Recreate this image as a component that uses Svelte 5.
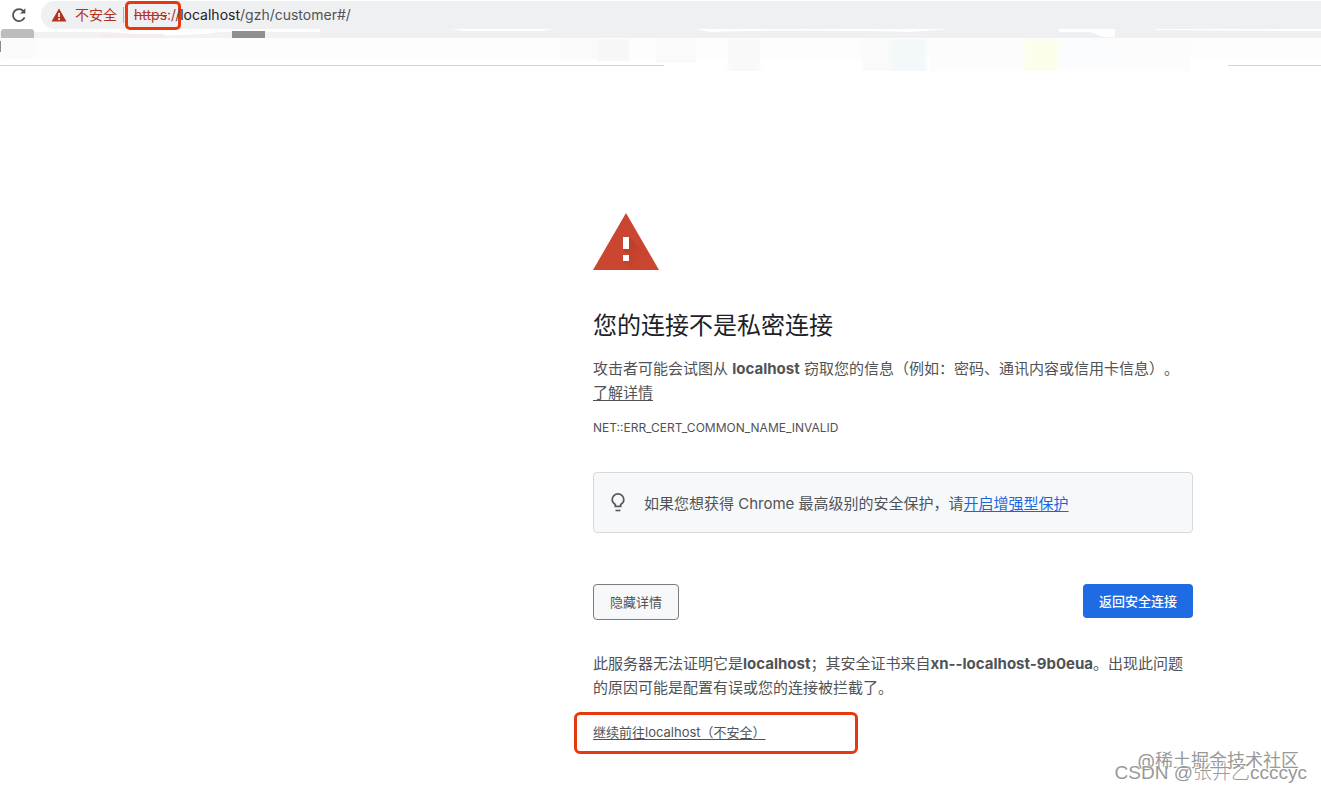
<script>
  const host = 'localhost';
  let open = $state(true);
</script>

<div class="window">
  <header>
    <div class="toolbar">
      <button class="reload" aria-label="重新加载">
        <svg width="16" height="16" viewBox="0 0 16 16">
          <path d="M13.600 10.300A6 6 0 1 1 12.600 4.200" fill="none" stroke="#505356" stroke-width="1.800" />
          <path d="M14.400 1.200v5.400H9z" fill="#505356" />
        </svg>
      </button>
      <div class="omnibox">
        <svg class="warn" width="16" height="14" viewBox="0 0 16 14">
          <path d="M8 0.5L15.5 13.5H0.5z" fill="#b5311f" />
          <path d="M7.2 5h1.7v4H7.2zM7.2 10.2h1.7v1.7H7.2z" fill="#fff" />
        </svg>
        <span class="unsafe">不安全</span>
        <span class="divider"></span>
        <div class="url"><span class="scheme"><s>https</s>:/</span>/<span class="host">{host}</span>/gzh/customer#/</div>
      </div>
    </div>
    <svg class="bookmarks" height="45" width="100%" aria-hidden="true">
      <defs>
        <filter id="soft" x="-5%" y="-20%" width="110%" height="140%"><feGaussianBlur stdDeviation="1.500 0.600" /></filter>
      </defs>
      <rect y="0" x="320" width="100%" height="10" fill="#eff0f2" />
      <rect y="4" width="320" height="6" fill="#f2f2f3" />
      <path d="M0 0H326Q310 4 220 4Q190 8 150 7L110 4H40L34 0z" fill="#fff" />
      <rect x="98" y="6" width="66" height="4" fill="#f6ebed" />
      <path d="M1 10V4Q1 1 4 1H31Q34 1 34 4V10z" fill="#bdbdbd" />
      <rect x="232" y="3" width="33" height="7" fill="#8f8f8f" />
      <path d="M450 1H555L540 3H465zM695 1H949L910 4Q800 1 710 4z" fill="#fff" />
      <path d="M1058 1H1115V9H1104L1090 4H1060zM1155 1H1321V3H1290L1155 2z" fill="#fff" />
      <rect x="0" y="10" width="100%" height="22" fill="#fdfdfd" />
      <path d="M0 13H1V24H0z" fill="#777" />
      <g filter="url(#soft)">
        <rect x="2" y="11" width="32" height="19" fill="#fafafa" />
        <rect x="560" y="11" width="40" height="20" fill="#fafafa" />
        <rect x="598" y="11" width="31" height="22" fill="#f7f7f7" />
        <rect x="656" y="11" width="40" height="24" fill="#fafafa" />
        <rect x="728" y="11" width="32" height="32" fill="#f9f9f9" />
        <rect x="862" y="11" width="32" height="32" fill="#fafafa" />
        <rect x="892" y="11" width="34" height="32" fill="#f3f8fb" />
        <rect x="930" y="11" width="94" height="32" fill="#fcfcfc" />
        <rect x="1024" y="11" width="34" height="32" fill="#fcfeec" />
        <rect x="1060" y="11" width="58" height="32" fill="#fafcfd" />
        <rect x="1118" y="11" width="72" height="32" fill="#fcfcfc" />
      </g>
      <rect x="0" y="37" width="664" height="1" fill="#d3d4d5" />
      <rect x="1228" y="37" width="100%" height="1" fill="#d3d4d5" />
    </svg>
  </header>

  <main>
    <svg class="danger" width="66" height="57" viewBox="0 0 66 57">
      <defs>
        <linearGradient id="shade" x1="0" y1="0" x2="1" y2="1">
          <stop offset="0" stop-color="#a83623" stop-opacity=".8" />
          <stop offset="1" stop-color="#cb4630" stop-opacity="0" />
        </linearGradient>
      </defs>
      <path d="M33 0L66 57H0z" fill="#cb4630" />
      <path d="M36 24L55 43V57H39L30 48L36 42L30 36H36z" fill="url(#shade)" />
      <path d="M30 24h6v12h-6zM30 42h6v6h-6z" fill="#fff" />
    </svg>
    <h1>您的连接不是私密连接</h1>
    <p class="text">攻击者可能会试图从 <strong>{host}</strong> 窃取您的信息（例如：密码、通讯内容或信用卡信息）。 <a class="learn" href="#learn">了解详情</a></p>
    <p class="code">NET::ERR_CERT_COMMON_NAME_INVALID</p>

    <div class="tip">
      <svg width="16" height="20" viewBox="0 0 16 20">
        <path d="M5.300 13.400v-2C3.300 10.300 2.200 8.700 2.200 6.700a5.800 5.800 0 0 1 11.600 0c0 2-1.100 3.600-3.100 4.700v2z" fill="none" stroke="#55595d" stroke-width="1.700" />
        <path d="M5.500 16.700h5v1.600h-5z" fill="#55595d" />
      </svg>
      <span>如果您想获得 Chrome 最高级别的安全保护，请<a href="#enhanced">开启增强型保护</a></span>
    </div>

    <div class="actions">
      <button class="details" aria-expanded={open} onclick={() => (open = !open)}>隐藏详情</button>
      <button class="back">返回安全连接</button>
    </div>

    {#if open}
      <p class="text">此服务器无法证明它是<strong>{host}</strong>；其安全证书来自<strong>xn--localhost-9b0eua</strong>。出现此问题的原因可能是配置有误或您的连接被拦截了。</p>
      <div class="proceed"><a href="#proceed">继续前往{host}（不安全）</a></div>
    {/if}
  </main>

  <footer>
    <span class="mark first">@稀土掘金技术社区</span>
    <span class="mark second">CSDN @张井乙ccccyc</span>
  </footer>
</div>

<style>
  :global(body) {
    margin: 0;
    background: #fff;
  }
  .window {
    position: relative;
    min-height: 100vh;
    box-sizing: border-box;
    overflow: hidden;
    font-family: Inter, 'Noto Sans CJK SC', sans-serif;
    text-spacing-trim: space-all;
    color: #505356;
  }
  button {
    font-family: inherit;
  }
  .toolbar {
    position: relative;
    z-index: 1;
    display: flex;
    height: 29px;
    padding-top: 1px;
    box-sizing: border-box;
  }
  .reload {
    width: 41px;
    padding: 0 0 0 11px;
    border: 0;
    background: none;
    display: flex;
    align-items: center;
  }
  .omnibox {
    flex: 1;
    display: flex;
    align-items: center;
    background: #eff0f2;
    border-radius: 14px 0 0 14px;
    padding-left: 10px;
    font-size: 14px;
    line-height: 20px;
    white-space: nowrap;
  }
  .unsafe {
    color: #b5311f;
    margin-left: 8px;
  }
  .divider {
    width: 1px;
    height: 16px;
    margin-left: 6px;
    background: #d6a49e;
  }
  .url {
    display: flex;
    align-items: center;
    margin-left: 1px;
  }
  .scheme {
    color: #b5311f;
    border: 3px solid #e63a0e;
    border-radius: 5px;
    padding: 1px 2px 2px 6px;
    margin-right: -6px;
  }
  .host {
    color: #202124;
  }
  .bookmarks {
    display: block;
    margin-top: -1px;
  }
  main {
    max-width: 600px;
    margin: 140px 128px 0 auto;
  }
  .danger {
    display: block;
  }
  h1 {
    margin: 39px 0 14px;
    font-size: 24px;
    line-height: 34px;
    font-weight: 400;
    color: #202124;
  }
  p {
    margin: 0;
  }
  .text {
    font-size: 15px;
    line-height: 24px;
  }
  main a {
    color: inherit;
    text-underline-offset: 2px;
  }
  .learn {
    display: inline-block;
  }
  .code {
    margin-top: 14px;
    font-size: 12px;
    line-height: 18px;
  }
  .tip {
    display: flex;
    align-items: center;
    gap: 18px;
    margin-top: 35px;
    padding: 19px 16px 16px;
    border: 1px solid #d5dadf;
    border-radius: 4px;
    background: #f7f8fa;
    font-size: 15px;
    line-height: 24px;
  }
  .tip a {
    color: #1b66df;
  }
  .tip svg {
    margin-bottom: 2px;
  }
  .actions {
    display: flex;
    justify-content: space-between;
    align-items: flex-start;
    margin: 51px 0 32px;
  }
  .actions button {
    padding: 8px 16px;
    border: 0;
    border-radius: 4px;
    font-size: 13px;
    line-height: 18px;
  }
  .actions .details {
    border: 1px solid #797c80;
    background: #f7f8fa;
    color: #505356;
  }
  .actions .back {
    background: #1f6be4;
    color: #fff;
    font-weight: 500;
  }
  .proceed {
    width: 260px;
    box-sizing: content-box;
    margin: 12px 0 0 -19px;
    padding: 8px 2px 10px 16px;
    border: 3px solid #e63a0e;
    border-radius: 6px;
    font-size: 13px;
    line-height: 18px;
  }
  .mark {
    position: absolute;
    white-space: nowrap;
    color: #999;
    line-height: 24px;
    text-shadow: -1px -1px 0 #fff;
  }
  .first {
    right: 22px;
    bottom: 20px;
    font-size: 18px;
    font-weight: 400;
  }
  .second {
    right: 14px;
    bottom: 8px;
    font-size: 19px;
    font-weight: 300;
    font-family: 'Liberation Sans', 'Noto Sans CJK SC', sans-serif;
  }
</style>
